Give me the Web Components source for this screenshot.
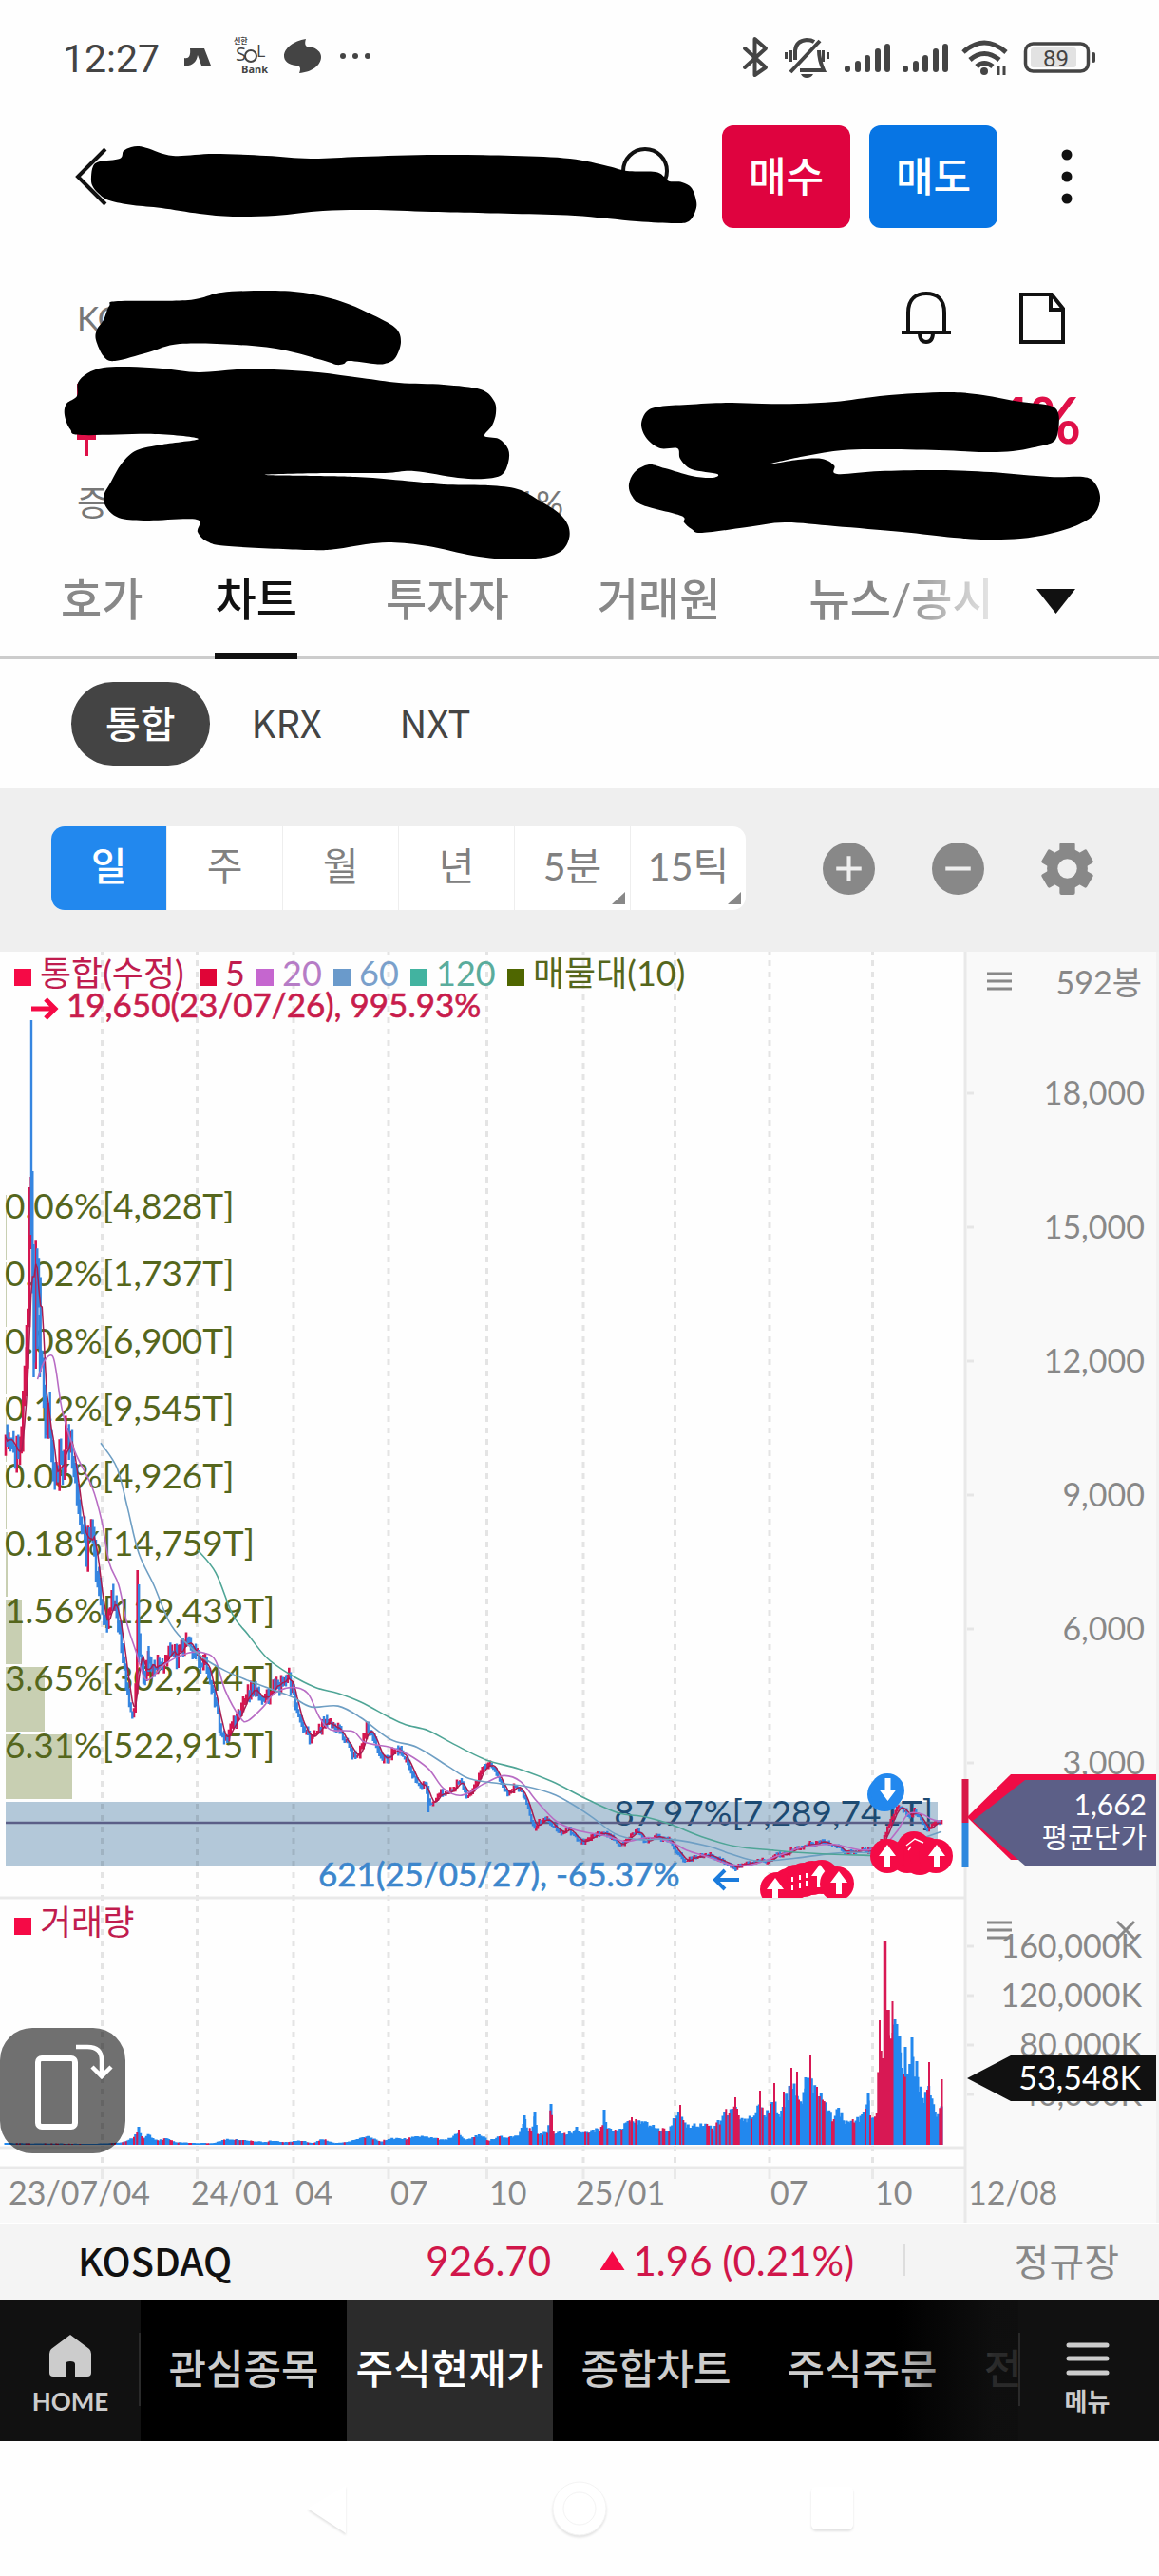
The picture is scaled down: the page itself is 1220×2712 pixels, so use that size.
<!DOCTYPE html>
<html lang="ko">
<head>
<meta charset="utf-8">
<meta name="viewport" content="width=device-width, initial-scale=1">
<title>주식현재가</title>
<style>
  body { margin: 0; background: #fefefe; color: #111; font-family: Lato, "Noto Sans CJK KR", sans-serif; }
</style>
</head>
<body>
<stock-app></stock-app>
<script>
const RESET = `
  *, *::before, *::after { box-sizing: border-box; }
  button { font: inherit; color: inherit; background: none; border: 0; padding: 0; margin: 0; display: block; }
  a { color: inherit; text-decoration: none; }
  svg { display: block; }
`;

function define(name, css, html, after) {
  const tpl = document.createElement('template');
  tpl.innerHTML = `<style>${RESET}${css}</style>${html}`;
  customElements.define(name, class extends HTMLElement {
    constructor() {
      super();
      this.attachShadow({ mode: 'open' }).append(tpl.content.cloneNode(true));
      if (after) after(this.shadowRoot);
    }
  });
}

/* Smooth curve through a list of points (Catmull-Rom to Bezier). */
function smooth(pts, closed, k = 6) {
  const n = pts.length;
  const at = i => closed ? pts[(i + n) % n] : pts[Math.max(0, Math.min(n - 1, i))];
  let d = `M${pts[0]}`;
  for (let i = 0; i < (closed ? n : n - 1); i++) {
    const [a, b, c, e] = [at(i - 1), at(i), at(i + 1), at(i + 2)];
    const f = v => v.toFixed(1);
    d += `C${f(b[0] + (c[0] - a[0]) / k)},${f(b[1] + (c[1] - a[1]) / k)} ${f(c[0] - (e[0] - b[0]) / k)},${f(c[1] - (e[1] - b[1]) / k)} ${c[0]},${f(c[1])}`;
  }
  return d + (closed ? 'Z' : '');
}
const pairs = s => s.trim().split(/\s+/).map(p => p.split(',').map(Number));

/* ---------- status bar ---------- */
define('status-bar', `
  :host { display: flex; justify-content: space-between; align-items: center; height: 120px; padding: 0 67px 0 66px; color: #444; }
  .side { display: flex; align-items: center; }
  time { font: 400 41px/48px Roboto, sans-serif; margin-right: 25px; padding-top: 4px; }
`, `
  <div class="side">
    <time>12:27</time>
    <svg width="200" height="44" viewBox="0 0 200 44" fill="#444" aria-hidden="true">
      <path d="M7 13H22L29 31H19L15 20C14 28 8 32 1 31V23C5 24 8 22 7 13Z"/>
      <text x="53" y="8" font-size="8" font-weight="700" font-family="Noto Sans CJK KR">신한</text>
      <text x="55" y="26" font-size="20" font-family="Open Sans">S</text>
      <circle cx="71" cy="21" r="6" fill="none" stroke="#444" stroke-width="2"/>
      <text x="77" y="22" font-size="18" font-family="Open Sans">L</text>
      <text x="61" y="39" font-size="11" font-weight="700" font-family="Open Sans">Bank</text>
      <path d="M129 3C127 9 129 12 133 11C141 13 145 17 145 22C145 31 135 38 122 39C124 34 123 31 119 31C110 30 106 26 106 21C106 13 116 5 129 3Z"/>
      <circle cx="168" cy="21" r="3"/><circle cx="181" cy="21" r="3"/><circle cx="194" cy="21" r="3"/>
    </svg>
  </div>
  <svg width="372" height="44" viewBox="782 37 372 44" aria-hidden="true" fill="none" stroke="#444" stroke-width="4">
    <path d="M785 50L807 70L795.500 78V40L807 50L785 70" stroke-linejoin="round" stroke-linecap="round"/>
    <path d="M838 62V52Q839 42 850 41Q855 41 858 43M863 52Q863 62 868 73H843M833 75L864 42"/>
    <path d="M828.500 54V61M833.500 52V64M867.500 52V64M872.500 54V61" stroke-width="3"/>
    <path d="M844 77H857Q855 81 850 81Q846 81 844 77Z" fill="#444" stroke="none"/>
    <g stroke-width="6" stroke-linecap="round">
      <path d="M893 71V72M904 66V72M914 60V72M925 53V72M935 48V72M954 71V72M965 66V72M975 60V72M986 53V72M996 48V72"/>
    </g>
    <g stroke-width="5">
      <path d="M1015 54Q1037 34 1060 54M1022 62Q1037 49 1053 62M1029 69Q1037 62 1046 69"/>
      <path d="M1052 69V78M1058 69V78" stroke-width="3"/>
      <circle cx="1037" cy="74" r="4" fill="#444" stroke="none"/>
    </g>
    <rect x="1086" y="49" width="48" height="21" rx="3" fill="#e2e2e2" stroke="none"/>
    <rect x="1080.500" y="45" width="66" height="29" rx="8" stroke-width="3.500"/>
    <path d="M1152 56V63" stroke-width="4" stroke-linecap="round"/>
    <text x="1099" y="69" font-size="24" font-family="Roboto" fill="#444" stroke="none">89</text>
  </svg>
`);

/* ---------- header with order buttons ---------- */
define('app-header', `
  :host { display: flex; align-items: center; padding: 12px 90px 12px 78px; }
  .search { margin-left: auto; margin-right: 56px; }
  .order { width: 135px; height: 108px; padding-bottom: 6px; border-radius: 12px; color: #fff; font: 500 43px/60px "Noto Sans CJK KR", sans-serif; margin-right: 20px; }
  .buy { background: #df033f; }
  .sell { background: #0775e4; }
  .more { margin-left: 46px; }
`, `
  <button aria-label="뒤로"><svg width="36" height="64" viewBox="0 0 36 64" fill="none" stroke="#111" stroke-width="4"><path d="M33 3L4 32L33 61"/></svg></button>
  <button class="search" aria-label="검색"><svg width="50" height="64" viewBox="0 0 50 64" fill="none" stroke="#111" stroke-width="4"><circle cx="25" cy="26" r="23"/></svg></button>
  <button class="order buy">매수</button>
  <button class="order sell">매도</button>
  <button class="more" aria-label="더보기"><svg width="14" height="60" viewBox="0 0 14 60" fill="#111"><circle cx="7" cy="7" r="5.500"/><circle cx="7" cy="30" r="5.500"/><circle cx="7" cy="53" r="5.500"/></svg></button>
`);

/* ---------- quote summary ---------- */
define('quote-summary', `
  :host { display: block; height: 338px; padding: 50px 82px 0 81px; color: #777; }
  .row { display: flex; justify-content: space-between; }
  .market { font-size: 35px; line-height: 64px; }
  .icons { display: flex; gap: 70px; padding-right: 16px; }
  .price { height: 76px; margin-top: 38px; align-items: flex-start; }
  .rate { color: #df1048; font-weight: 700; font-size: 66px; line-height: 76px; }
  .volume { width: 512px; font-size: 36px; line-height: 44px; margin-top: 27px; }
`, `
  <div class="row">
    <span class="market">KOSDAQ</span>
    <span class="icons">
      <button aria-label="알림"><svg width="54" height="58" viewBox="0 0 54 58" fill="none" stroke="#111" stroke-width="4"><path d="M1 45H53M8 45V24C8 9 17 4 27 4S46 9 46 24V45M20 45C20 53 23 55 27 55S34 53 34 45"/></svg></button>
      <button aria-label="메모"><svg width="50" height="58" viewBox="0 0 50 58" fill="none" stroke="#111" stroke-width="4"><path d="M3 5H35L47 20V55H3ZM34 5V21H47"/></svg></button>
    </span>
  </div>
  <div class="row price">
    <svg width="20" height="76" viewBox="0 0 20 76" fill="#df1048" aria-label="상한"><path d="M0 0H4V40H20V59H12V76H9V59H0Z"/></svg>
    <strong class="rate">4%</strong>
  </div>
  <div class="row volume"><span>증</span><span>1%</span></div>
`);

/* ---------- marker strokes lying over the header and the summary ---------- */
const BLOTS = [
  `96,186 98,175 105,170 126,167 130,159 138,155 146,154 155,156 182,164 225,162 280,164 327,167 380,165 460,163 540,164 600,167 640,175 660,180 690,181 700,187 705,191 718,192 728,198 733,212 732,222 725,233 710,235 670,233 605,227 540,225 455,223 390,221 340,222 290,227 245,228 210,225 170,219 140,216 115,211 103,203 97,195`,
  `101,358 102,347 109,337 115,322 124,317 198,316 233,308 280,306 319,308 358,317 389,330 416,345 422,360 416,377 405,383 393,383 368,380 362,383 354,384 342,380 296,368 249,363 189,362 156,371 121,380 109,375`,
  `68,437 70,425 81,417 82,403 92,393 109,387 136,386 171,388 209,392 249,389 288,389 335,392 381,398 420,403 467,405 506,410 520,422 522,435 518,448 510,459 525,462 535,473 535,487 528,500 510,504 482,503 436,496 405,498 342,498 279,500 374,502 436,507 467,510 514,511 545,515 568,527 588,540 598,553 599,567 591,580 572,587 537,589 498,585 451,575 412,571 385,573 354,578 327,579 241,575 218,570 208,560 207,547 156,548 128,546 114,537 109,523 117,507 128,488 144,474 171,468 209,462 163,457 86,458 74,452`,
  `675,447 681,433 695,428 724,426 767,424 802,425 840,425 879,423 926,417 965,414 1004,413 1035,416 1074,423 1105,427 1114,435 1114,453 1109,465 1093,470 1066,475 1035,476 988,474 926,473 887,474 848,480 808,489 840,484 865,483 878,490 881,499 926,496 988,495 1043,497 1105,502 1140,502 1152,508 1158,523 1153,540 1136,552 1105,562 1074,567 1039,568 1004,566 949,560 879,554 826,550 786,555 739,561 728,557 720,550 717,543 677,532 665,522 662,510 668,497 683,489 700,493 728,501 749,503 755,499 728,494 716,483 713,472 695,472 681,462`
];
define('marker-strokes', `
  :host { position: absolute; inset: 0 0 auto 0; pointer-events: none; }
  svg { width: 100%; height: auto; }
`, `<svg viewBox="0 0 1220 600" aria-hidden="true"></svg>`, root => {
  root.querySelector('svg').innerHTML = BLOTS.map(b => `<path d="${smooth(pairs(b), true)}"/>`).join('');
});

/* ---------- section tabs ---------- */
define('section-tabs', `
  :host { display: flex; align-items: flex-start; height: 104px; border-bottom: 3px solid #ccc; padding-left: 64px; }
  nav { display: flex; flex: 1; gap: 93px; overflow: hidden; height: 104px; color: #888; white-space: nowrap;
        font: 500 47px/80px Lato, "Noto Sans CJK KR", sans-serif;
        -webkit-mask: linear-gradient(90deg, #000 880px, #0003 980px); mask: linear-gradient(90deg, #000 880px, #0003 980px); }
  a { height: 104px; }
  a.on { color: #111; border-bottom: 7px solid #111; margin-left: -17px; }
  button { width: 41px; height: 26px; margin: 30px 88px 0 49px; background: #111; clip-path: polygon(0 0, 100% 0, 50% 100%); }
`, `
  <nav><a href="#">호가</a><a href="#" class="on" aria-current="page">차트</a><a href="#">투자자</a><a href="#">거래원</a><a href="#">뉴스/공시</a></nav>
  <button aria-label="메뉴 펼치기"></button>
`);

/* ---------- exchange chips ---------- */
define('exchange-chips', `
  :host { display: flex; align-items: center; gap: 6px; height: 136px; padding-left: 75px; color: #444; font: 400 40px/84px "Noto Sans CJK KR", sans-serif; }
  button { height: 88px; padding: 0 38px 4px; border-radius: 44px; }
  button.on { background: #444; color: #fff; font-weight: 500; padding: 0 36px 4px; }
`, `<button class="on" aria-pressed="true">통합</button><button>KRX</button><button>NXT</button>`);

/* ---------- period toolbar ---------- */
define('period-toolbar', `
  :host { display: flex; align-items: center; height: 172px; padding: 0 69px 4px 54px; background: #efefef; }
  .seg { display: flex; flex: 0 0 731px; height: 88px; border-radius: 14px; overflow: hidden; background: #fff; }
  .seg button { flex: 1; position: relative; font-size: 41px; line-height: 84px; padding-bottom: 4px; color: #808080; border-right: 1px solid #eee; }
  .seg button:last-child { border: 0; }
  .seg .on { background: #2288ee; color: #fff; font-weight: 500; }
  .more::after { content: ""; position: absolute; right: 5px; bottom: 6px; width: 14px; height: 13px; background: #888; clip-path: polygon(100% 0, 100% 100%, 0 100%); }
  .tools { display: flex; flex: 1; justify-content: flex-end; gap: 60px; }
`, `
  <div class="seg"><button class="on" aria-pressed="true">일</button><button>주</button><button>월</button><button>년</button><button class="more">5분</button><button class="more">15틱</button></div>
  <div class="tools">
    <button aria-label="확대"><svg width="55" height="55" viewBox="0 0 54 54"><circle cx="27" cy="27" r="27" fill="#888"/><path d="M14 27H40M27 14V40" stroke="#efefef" stroke-width="4"/></svg></button>
    <button aria-label="축소"><svg width="55" height="55" viewBox="0 0 54 54"><circle cx="27" cy="27" r="27" fill="#888"/><path d="M14 27H40" stroke="#efefef" stroke-width="4"/></svg></button>
    <button aria-label="설정"><svg width="55" height="55" viewBox="0 0 54 54"><g fill="#888"><circle cx="27" cy="27" r="21"/><rect x="19" y="0" width="16" height="54" rx="2"/><rect x="19" y="0" width="16" height="54" rx="2" transform="rotate(60 27 27)"/><rect x="19" y="0" width="16" height="54" rx="2" transform="rotate(120 27 27)"/></g><circle cx="27" cy="27" r="10" fill="#efefef"/></svg></button>
  </div>
`);

/* ---------- chart ---------- */
/* Level v counts downwards from the 1480 gridline of the drawing. */
const Y = v => 1480 + v * 1.033;
const CLOSE = pairs(`6,40 9,28 12,42 16,48 22,40 24,0 27,-42 29,-85 31,-150 32.5,-240 34,-140 35,-100 36,-60 38,-150 41,-105 43,-55 46,-20 48,35 50,5 52,20 55,50 58,75 60,78 63,50 66,75 68,50 71,20 75,50 80,80 83,100 88,130 91,150 94,125 98,140 102,170 106,200 110,225 113,230 117,195 120,200 124,220 128,240 133,285 138,315 140,318 143,290 145,230 148,250 152,285 156,255 160,268 166,262 172,262 178,250 186,258 192,245 197,238 200,240 206,255 212,265 216,260 222,285 228,310 233,335 237,341 244,328 250,318 256,303 262,292 268,290 275,295 282,298 287,285 294,285 303,272 308,290 313,315 320,330 328,342 336,330 342,321 350,326 358,332 366,345 374,358 380,350 386,330 392,338 400,355 408,362 416,348 425,355 434,374 440,385 448,386 452,405 458,402 464,393 470,397 478,390 484,380 492,400 500,388 507,370 514,366 520,370 527,385 534,397 541,388 549,392 556,410 562,430 568,424 576,420 584,430 592,435 598,430 606,440 614,445 624,438 636,435 647,443 653,448 671,432 679,444 691,439 705,442 713,456 721,463 734,460 748,458 758,463 773,471 786,466 798,464 810,463 815,458 829,455 845,449 865,445 877,447 889,455 908,453 920,453 928,445 936,426 944,408 952,413 958,419 962,411 966,418 976,434 983,426 991,423`);
const MA = [
  ['#b86cc4', `39.5,-27 47,-46 55,-51 59,-36 66,7 79,47 97,83 107,117 115,160 125,183 134,223 143,250 152,277 160,277 174,263 198,252 215,252 227,260 237,290 253,318 261,321 277,307 289,293 308,287 324,293 336,317 348,330 372,332 384,343 411,348 429,355 451,370 467,390 486,397 510,385 530,377 548,383 565,403 585,423 605,432 640,439 659,444 683,440 707,445 723,453 746,460 770,468 790,468 821,458 845,450 877,447 908,453 930,448 944,434 956,416 970,416 980,421 991,424`],
  ['#6f9fc4', `106,38 123,63 134,103 146,150 162,183 178,220 194,240 214,257 237,270 261,280 289,290 308,297 328,307 356,306 380,318 411,340 439,348 471,367 494,380 526,385 554,388 585,397 620,417 647,436 671,442 707,442 746,449 770,457 798,464 837,461 869,457 893,455 930,455 956,445 976,439 991,434`],
  ['#4fa596', `208,147 227,170 245,213 261,233 281,257 304,273 332,287 356,293 380,302 409,317 427,325 451,331 478,345 512,361 546,370 581,383 620,402 651,415 679,419 707,427 738,439 774,449 814,453 853,456 908,458 930,458 956,454 991,445`]
];
const VOLUME = pairs(`6,2 100,1 130,3 142,10 146,19 150,8 157,12 165,5 176,8 185,3 205,2 225,2 240,7 252,6 280,3 285,5 300,3 316,5 330,2 340,7 352,2 365,3 380,8 387,10 400,4 413,8 425,7 440,10 455,8 470,6 483,14 490,6 505,12 515,5 525,10 540,9 548,14 552,30 556,18 560,18 563,34 566,12 570,12 577,16 580,42 583,15 600,14 607,18 614,15 628,18 634,20 636,36 640,18 653,20 665,28 680,25 692,20 705,18 710,35 716,38 722,22 738,25 750,20 758,28 762,38 768,38 774,45 780,30 790,32 800,48 805,33 815,55 820,35 825,48 833,72 838,68 842,50 848,64 853,82 860,60 870,50 876,32 882,44 890,28 905,32 914,50 918,28 923,45 926,130 929,110 931,160 935,142 939,120 942,130 946,105 950,90 953,95 956,78 960,100 964,85 968,70 973,50 977,70 981,50 986,38 991,48`);
/* Days that stand out: x, height, colour (1 = up). */
const PEAKS = [[146,19,0],[483,16,1],[552,31,0],[563,35,0],[580,43,0],[607,19,0],[636,37,0],[665,29,1],[716,42,1],[774,50,1],[800,57,1],[815,65,1],[825,56,1],[833,81,1],[839,77,1],[848,71,0],[853,94,1],[860,61,1],[914,54,0],[926,131,1],[931.500,214,1],[935,142,1],[939.500,151,1],[942,132,0],[944,127,0],[947,114,0],[953,103,0],[960,113,0],[965,88,0],[978,87,1],[991.500,69,1]];

function sample(pts, x) {
  let i = 1;
  while (i < pts.length - 1 && pts[i][0] < x) i++;
  const [a, b] = [pts[i - 1], pts[i]];
  return a[1] + (b[1] - a[1]) * Math.min(1, Math.max(0, (x - a[0]) / (b[0] - a[0])));
}
function drawChart(root) {
  let seed = 20231;
  const rnd = () => (seed = (seed * 16807) % 2147483647) / 2147483647;
  const BAR = 592, X0 = 6, STEP = (991 - 6) / (BAR - 1);
  let up = '', down = '', vUp = '', vDown = '';
  const closes = [];
  let prev = sample(CLOSE, X0);
  for (let i = 0; i < BAR; i++) {
    const x = X0 + i * STEP, base = sample(CLOSE, x);
    const amp = Math.max(3.6, (470 - base) * 0.056);
    const c = base + (rnd() - 0.5) * amp;
    const hi = Math.min(c, prev) - rnd() * amp * 0.7, lo = Math.max(c, prev) + rnd() * amp * 0.7;
    const seg = `M${x.toFixed(1)},${Y(hi).toFixed(1)}V${Y(lo).toFixed(1)}`;
    c < prev ? up += seg : down += seg;
    closes.push([x, c]);
    prev = c;
    const h = Math.max(1, sample(VOLUME, x) * (0.74 + rnd() * 0.26));
    const bar = `M${x.toFixed(1)},2258v${-h.toFixed(1)}`;
    (x > 924 && x < 940) || rnd() < 0.2 ? vUp += bar : vDown += bar;
  }
  up += `M30.500,1250V1390M28,1395V1470M144.700,1653V1740`;
  down += `M33,1074V1300M35.500,1310V1450M39.500,1325V1420M42,1384V1450M146.200,1668V1750M156.500,1733V1760M451,1880V1908`;
  for (const [x, h, u] of PEAKS) u ? vUp += `M${x},2258v${-h}` : vDown += `M${x},2258v${-h}`;
  const ma5 = closes.map((p, i) => {
    const w = closes.slice(Math.max(0, i - 4), i + 1);
    return `${p[0].toFixed(1)},${Y(w.reduce((s, q) => s + q[1], 0) / w.length).toFixed(1)}`;
  });

  const GRID = [107.500, 207.500, 309, 409, 512.500, 614, 710.500, 810, 918.500];
  const grid = GRID.map(x => `M${x},1002V2280`).join('');
  const ticks = GRID.map(x => `M${x},2283V2294`).join('');

  const rows = ['0.06%[4,828T]', '0.02%[1,737T]', '0.08%[6,900T]', '0.12%[9,545T]', '0.06%[4,926T]', '0.18%[14,759T]', '1.56%[129,439T]', '3.65%[302,244T]', '6.31%[522,915T]'];
  const widths = [1, 1, 1, 1, 1, 2, 17, 41, 70];
  const profile = rows.map((t, i) => `<rect x="6" y="${1258 + 71 * i}" width="${widths[i]}" height="68" fill="#c8cfb2"/>`).join('');
  const labels = rows.map((t, i) => `<text x="5" y="${1283 + 71 * i}">${t}</text>`).join('');

  const legend = [['통합(수정)', '#f50a46', '#c01c4e', 15], ['5', '#e00537', '#c01c4e', 210], ['20', '#c566cf', '#b67cc6', 270], ['60', '#6a9acb', '#7aa0cb', 351], ['120', '#42b3a0', '#5aac9c', 432], ['매물대(10)', '#4f6600', '#55661c', 534]]
    .map(([t, s, c, x]) => `<rect x="${x}" y="1020" width="18" height="18" fill="${s}"/><text x="${x + 27}" y="1038" fill="${c}">${t}</text>`).join('');

  const axis = ['18,000', '15,000', '12,000', '9,000', '6,000', '3,000'].map((t, i) => `<path d="M1018,${1151 + 141 * i}h7" stroke="#e6e6e6" stroke-width="3"/><text x="1205" y="${1163 + 141 * i}" text-anchor="end">${t}</text>`).join('')
    + ['160,000K', '120,000K', '80,000K', '40,000K'].map((t, i) => `<path d="M1018,${2049 + 52 * i}h7" stroke="#e6e6e6" stroke-width="3"/><text x="1202" y="${2061 + 52 * i}" text-anchor="end">${t}</text>`).join('');
  const dates = [['23/07/04', 9], ['24/01', 201], ['04', 311], ['07', 411], ['10', 515], ['25/01', 606], ['07', 811], ['10', 921], ['12/08', 1019]].map(([t, x]) => `<text x="${x}" y="2321">${t}</text>`).join('');

  const disc = (x, y, c) => `<circle cx="${x}" cy="${y}" r="18" fill="${c}"/>`;
  const arrowUp = (x, y) => `<path d="M${x},${y - 13}l9,12h-6v12h-6v-12h-6z" fill="#fff"/>`;
  const R = '#f50a46';

  root.querySelector('svg.plot').innerHTML = `
    <defs><clipPath id="pane"><rect x="0" y="1002" width="1013" height="996"/></clipPath></defs>
    <rect x="0" y="2282" width="1015" height="58" fill="#f9f9f9"/>
    <rect x="1017" y="1002" width="200" height="1338" fill="#f9f9f9"/>
    <rect x="1217" y="1002" width="3" height="1338" fill="#f2f2f2"/>
    ${profile}
    <rect x="6" y="1897" width="981" height="68" fill="#b3c8d9"/>
    <path d="${grid}" stroke="#000" stroke-opacity=".1" stroke-width="3" stroke-dasharray="6 6" stroke-dashoffset="3"/>
    <path d="${ticks}M0,1998H1015M0,2261H1015M0,2282H1015M1016,1002V2340" stroke="#e9e9e9" stroke-width="3"/>
    <g font-size="36">${legend}
      <rect x="15" y="2019" width="18" height="18" fill="${R}"/><text x="42" y="2037" fill="#c01c4e">거래량</text>
    </g>
    <g font-size="37" fill="#55661c">${labels}
      <text x="982" y="1922" text-anchor="end" fill="#1c4a72">87.97%[7,289,741T]</text>
    </g>
    <path d="M6,1919H990" stroke="#5b5f88" stroke-width="2.500"/>
    <g fill="none" stroke-width="1.600">
      <path d="${up}" stroke="#d51650" stroke-width="2.600"/>
      <path d="${down}" stroke="#3585e0" stroke-width="2.400"/>
      <path d="M${ma5.join('L')}" stroke="#a81c50" stroke-width="1.500"/>
      ${MA.map(([c, p]) => `<path d="${smooth(pairs(p).map(([x, v]) => [x, Y(v)]))}" stroke="${c}"/>`).join('')}
      <path d="${vDown}" stroke="#2288ee" stroke-width="3"/>
      <path d="${vUp}" stroke="#d81854" stroke-width="2"/>
      <path d="M931.500,2258V2044M935,2258V2116" stroke="#d81854" stroke-width="3.500"/>
    </g>
    <g font-size="35">
      <text x="70" y="1071" fill="#c81c4c" stroke="#c81c4c" stroke-width=".6">19,650(23/07/26), 995.93%</text>
      <path d="M33,1062H56M48,1052L58,1062L48,1072" fill="none" stroke="${R}" stroke-width="5"/>
      <text x="335" y="1986" fill="#3c86cc" stroke="#3c86cc" stroke-width=".6">621(25/05/27), -65.37%</text>
      <path d="M778,1979H754M763,1969L753,1979L763,1989" fill="none" stroke="#1a7bdc" stroke-width="4"/>
    </g>
    <g clip-path="url(#pane)">
      ${disc(818, 1989, R)}${disc(830, 1985, R)}${disc(838, 1981, R)}${disc(846, 1979, R)}${disc(855, 1977, R)}${disc(865, 1976, R)}
      ${arrowUp(816, 1990)}<path d="M834,1990v-14M842,1988v-14M849,1986v-14" stroke="#fff" stroke-width="2" stroke-dasharray="6 3"/>${arrowUp(863, 1976)}${disc(881, 1983, R)}${arrowUp(883, 1983)}
      ${disc(955, 1954, R)}${disc(962, 1946, R)}${disc(968, 1956, R)}${disc(975, 1952, R)}
      <path d="M954,1943l9,-7 9,4M956,1948l3,-4" stroke="#fff" stroke-width="1.500" fill="none"/>
      ${disc(934, 1954, R)}${disc(985, 1954, R)}${arrowUp(934, 1955)}${arrowUp(986, 1955)}
      ${disc(931, 1889, '#2288ee')}${disc(934, 1885, '#2288ee')}
      <path d="M934.500,1896l9,-12h-6v-12h-6v12h-6z" fill="#fff"/>
    </g>
    <g font-size="34" fill="#888">${axis}${dates}<text x="1202" y="1047" text-anchor="end">592봉</text></g>
    <path d="M1016,1873V1919" stroke="#d81848" stroke-width="7"/><path d="M1016,1919V1966" stroke="#2e88de" stroke-width="7"/>
    <path d="M1018,1913L1064,1868H1217V1958H1064Z" fill="#f00c45"/>
    <path d="M1024,1917L1079,1874H1217V1964H1079Z" fill="#5c5f87"/>
    <g font-size="30" fill="#fff" text-anchor="end"><text x="1207" y="1911">1,662</text><text x="1207" y="1945">평균단가</text></g>
    <path d="M1018,2188L1064,2164H1217V2212H1064Z" fill="#111"/>
    <text x="1201" y="2200" text-anchor="end" font-size="34" fill="#fff">53,548K</text>`;
}
define('stock-chart', `
  :host { display: block; position: relative; border-bottom: 1px solid #fff; }
  .plot { width: 100%; height: auto; font-family: Lato, "Noto Sans CJK KR", sans-serif; }
  .rotate { position: absolute; left: 0; bottom: 73px; width: 132px; height: 132px; border-radius: 34px; background: #0000008f; }
  .tool { position: absolute; }
  .t1 { top: 20px; right: 155px; }
  .t2 { top: 1019px; right: 155px; }
  .t3 { top: 1019px; right: 25px; }
`, `
  <svg class="plot" viewBox="0 1002 1220 1338" role="img" aria-label="일봉 차트"></svg>
  <button class="tool t1" aria-label="가격 차트 메뉴"><svg width="26" height="22" stroke="#888" stroke-width="3"><path d="M0 3H26M0 11H26M0 19H26"/></svg></button>
  <button class="tool t2" aria-label="거래량 차트 메뉴"><svg width="26" height="22" stroke="#888" stroke-width="3"><path d="M0 3H26M0 11H26M0 19H26"/></svg></button>
  <button class="tool t3" aria-label="거래량 닫기"><svg width="20" height="22" stroke="#888" stroke-width="3"><path d="M1 2L19 20M19 2L1 20"/></svg></button>
  <button class="rotate" aria-label="화면 회전"><svg width="132" height="132" viewBox="0 0 132 132" fill="none" stroke="#fff"><rect x="40" y="32" width="39" height="72" rx="4" stroke-width="6"/><path d="M80 20H92Q107 20 107 34V49M97 41L107 51L117 41" stroke-width="4.500"/></svg></button>
`, drawChart);

/* ---------- index ticker ---------- */
define('index-ticker', `
  :host { display: grid; grid-template-columns: 366fr 183fr 319fr 227fr; align-items: center; height: 80px; padding: 0 42px 4px 82px; background: #f4f4f4; font-size: 42px; line-height: 60px; }
  .name, .state { font-family: "Noto Sans CJK KR", sans-serif; font-size: 40px; }
  .name { font-weight: 500; }
  .up { color: #d0164a; padding-top: 2px; }
  .chg { display: flex; align-items: center; gap: 9px; }
  .chg::before { content: ""; width: 26px; height: 20px; background: #f50a46; clip-path: polygon(50% 0, 100% 100%, 0 100%); }
  .state { border-left: 2px solid #ddd; text-align: right; color: #888; line-height: 34px; }
`, `<span class="name">KOSDAQ</span><span class="up">926.70</span><span class="up chg">1.96 (0.21%)</span><span class="state">정규장</span>`);

/* ---------- bottom navigation ---------- */
define('bottom-nav', `
  :host { display: flex; height: 149px; background: #111; color: #ccc; white-space: nowrap; }
  .end { flex: 0 0 148px; display: flex; flex-direction: column; align-items: center; padding-top: 37px; font-size: 26px; font-weight: 700; line-height: 32px; gap: 10px; }
  .home { border-right: 2px solid; border-image: linear-gradient(#111 24%, #2a2a2a 24% 75%, #111 75%) 1; padding-left: 2px; }
  .menu { border-left: 2px solid; border-image: linear-gradient(#111 24%, #2a2a2a 24% 75%, #111 75%) 1; padding-right: 5px; }
  nav { flex: 1; display: flex; overflow: hidden; background: #000; position: relative; font: 500 43px/140px "Noto Sans CJK KR", sans-serif; }
  nav::after { content: ""; position: absolute; inset: 0 0 0 auto; width: 130px; background: linear-gradient(90deg, #1110, #111d 80%); }
  nav a { flex: 0 0 217px; text-align: center; }
  nav .on { background: #2b2b2b; color: #fff; }
  nav .last { text-align: left; padding-left: 20px; }
`, `
  <a class="end home" href="#"><svg width="44" height="44" viewBox="0 0 44 44" fill="#ccc"><path d="M22 0L42 15Q44 17 44 20V40Q44 44 40 44H27V31Q27 28 22 28T17 31V44H4Q0 44 0 40V20Q0 17 2 15Z"/></svg>HOME</a>
  <nav><a href="#">관심종목</a><a class="on" href="#" aria-current="page">주식현재가</a><a href="#">종합차트</a><a href="#">주식주문</a><a class="last" href="#">전</a></nav>
  <a class="end menu" href="#"><svg width="46" height="44" viewBox="0 0 46 44" stroke="#ccc" stroke-width="5" stroke-linecap="round"><path d="M3 11H43M3 25H43M3 40H43"/></svg>메뉴</a>
`);

/* ---------- system navigation ---------- */
define('system-nav', `
  :host { display: flex; justify-content: center; align-items: center; gap: 206px; height: 142px; }
  svg { filter: drop-shadow(0 2px 1px #0000001c); }
`, `
  <button aria-label="뒤로"><svg width="60" height="60" viewBox="0 0 60 60" fill="#fff"><path d="M10 30L50 6V56Z"/></svg></button>
  <button aria-label="홈"><svg width="60" height="60" viewBox="0 0 60 60" fill="#fff" stroke="#f3f3f3"><circle cx="30" cy="30" r="28"/><circle cx="30" cy="30" r="17"/></svg></button>
  <button aria-label="최근 앱"><svg width="60" height="60" viewBox="0 0 60 60" fill="#fff"><rect x="8" y="7" width="44" height="45" rx="5"/></svg></button>
`);

/* ---------- page ---------- */
define('stock-app', `:host { display: block; position: relative; }`, `
  <status-bar></status-bar>
  <app-header></app-header>
  <quote-summary></quote-summary>
  <section-tabs></section-tabs>
  <exchange-chips></exchange-chips>
  <period-toolbar></period-toolbar>
  <stock-chart></stock-chart>
  <index-ticker></index-ticker>
  <bottom-nav></bottom-nav>
  <system-nav></system-nav>
  <marker-strokes></marker-strokes>
`);
</script>
</body>
</html>
